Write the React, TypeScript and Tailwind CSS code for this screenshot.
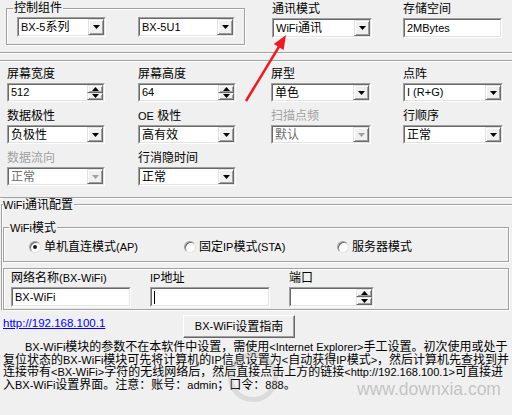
import React from 'react'

// Latin runs render a bit smaller than the CJK ones, like Tahoma 8pt next to SimSun 9pt
function T({ s }: { s: string }) {
  const parts = s.split(/([\x21-\x7E](?:[\x20-\x7E]*[\x21-\x7E])?)/)
  return (
    <>
      {parts.map((p, i) =>
        i % 2 === 1 ? (
          <span key={i} className="text-[11px]">
            {p}
          </span>
        ) : (
          <React.Fragment key={i}>{p}</React.Fragment>
        ),
      )}
    </>
  )
}

function DownTri({ gray }: { gray?: boolean }) {
  return (
    <svg width="7" height="4" viewBox="0 0 7 4">
      <path d="M0 0h7L3.5 4z" fill={gray ? '#a0a0a0' : '#000'} />
    </svg>
  )
}

function UpTri() {
  return (
    <svg width="7" height="4" viewBox="0 0 7 4">
      <path d="M0 4h7L3.5 0z" fill="#000" />
    </svg>
  )
}

function Sunken({ w, h = 'h-[19px]', children }: { w: string; h?: string; children: React.ReactNode }) {
  return (
    <div className={`${w} ${h} border border-t-[#a0a0a0] border-l-[#a0a0a0] border-r-white border-b-white`}>
      <div className="flex h-full border border-t-[#696969] border-l-[#696969] border-r-[#e3e3e3] border-b-[#e3e3e3] bg-white">
        {children}
      </div>
    </div>
  )
}

const raised =
  'border border-t-[#e3e3e3] border-l-[#e3e3e3] border-r-[#696969] border-b-[#696969] bg-[#f0f0f0] shadow-[inset_1px_1px_0_white,inset_-1px_-1px_0_#a0a0a0]'

function Combo({ value, w, h, disabled }: { value: string; w: string; h?: string; disabled?: boolean }) {
  return (
    <Sunken w={w} h={h}>
      <span className={`flex-1 pl-[2px] flex items-center whitespace-nowrap ${disabled ? 'text-[#6d6d6d]' : ''}`}>
        <T s={value} />
      </span>
      <div className={`w-[16px] h-full flex items-center justify-center ${raised}`}>
        <DownTri gray={disabled} />
      </div>
    </Sunken>
  )
}

function Spin({ value, w, h }: { value: string; w: string; h?: string }) {
  return (
    <Sunken w={w} h={h}>
      <span className="flex-1 pl-[2px] flex items-center">
        <T s={value} />
      </span>
      <div className="w-[16px] h-full flex flex-col">
        <div className={`flex-1 flex items-center justify-center ${raised}`}>
          <UpTri />
        </div>
        <div className={`flex-1 flex items-center justify-center ${raised}`}>
          <DownTri />
        </div>
      </div>
    </Sunken>
  )
}

function TextBox({ value, w, h, caret }: { value: string; w: string; h?: string; caret?: boolean }) {
  return (
    <Sunken w={w} h={h}>
      <span className="flex-1 pl-[2px] flex items-center">
        {caret && <span className="w-px h-[13px] bg-black" />}
        <T s={value} />
      </span>
    </Sunken>
  )
}

function Etched() {
  return <div className="h-[2px] border-t border-t-[#a0a0a0] border-b border-b-white" />
}

function Field({ label, disabled, children }: { label: string; disabled?: boolean; children: React.ReactNode }) {
  return (
    <div className="flex flex-col">
      <div className={`leading-[14px] h-[14px] whitespace-nowrap ${disabled ? 'text-[#a0a0a0]' : ''}`}>
        <T s={label} />
      </div>
      <div className="mt-[2px]">{children}</div>
    </div>
  )
}

function Radio({ label, checked, w }: { label: string; checked?: boolean; w: string }) {
  return (
    <div className={`flex items-center gap-[3px] ${w}`}>
      <div className="w-[12px] h-[12px] rounded-full border border-t-[#a0a0a0] border-l-[#a0a0a0] border-r-[#e3e3e3] border-b-[#e3e3e3] bg-white flex items-center justify-center shadow-[inset_1px_1px_0_#696969]">
        {checked && <div className="w-[4px] h-[4px] rounded-full bg-[#1a1a1a]" />}
      </div>
      <span className="whitespace-nowrap leading-[14px]">
        <T s={label} />
      </span>
    </div>
  )
}

const groupLine = 'border border-[#a0a0a0] shadow-[1px_1px_0_white,inset_1px_1px_0_white]'

export default function App() {
  return (
    <div className="relative w-[512px] h-[415px] overflow-hidden bg-[#f0f0f0] text-[12px] text-black font-['Liberation_Sans','Noto_Sans_CJK_SC',sans-serif]">
      {/* top: control group, comm mode, storage */}
      <div className="flex items-start h-[52px]">
        <div className={`relative ml-[6px] mt-[8px] w-[239px] h-[37px] ${groupLine}`}>
          <span className="absolute left-[6px] -top-[8px] px-px bg-[#f0f0f0] leading-[14px]">控制组件</span>
          <div className="flex items-start pt-[8px] pl-[10px] gap-[32px]">
            <Combo value="BX-5系列" w="w-[89px]" h="h-[20px]" />
            <Combo value="BX-5U1" w="w-[97px]" h="h-[20px]" />
          </div>
        </div>
        <div className="ml-[27px] pt-[2px]">
          <Field label="通讯模式">
            <Combo value="WiFi通讯" w="w-[100px]" h="h-[20px]" />
          </Field>
        </div>
        <div className="ml-[31px] pt-[2px]">
          <Field label="存储空间">
            <TextBox value="2MBytes" w="w-[99px]" h="h-[20px]" />
          </Field>
        </div>
      </div>
      <Etched />
      <div className="h-[6px]" />
      <Etched />

      {/* screen parameters */}
      <div className="grid grid-cols-[131px_133px_132px_100px] gap-y-[7px] pl-[7px] pt-[5px]">
        <Field label="屏幕宽度">
          <Spin value="512" w="w-[98px]" />
        </Field>
        <Field label="屏幕高度">
          <Spin value="64" w="w-[98px]" />
        </Field>
        <Field label="屏型">
          <Combo value="单色" w="w-[100px]" />
        </Field>
        <Field label="点阵">
          <Combo value="I  (R+G)" w="w-[100px]" />
        </Field>

        <Field label="数据极性">
          <Combo value="负极性" w="w-[98px]" />
        </Field>
        <Field label="OE 极性">
          <Combo value="高有效" w="w-[98px]" />
        </Field>
        <Field label="扫描点频" disabled>
          <Combo value="默认" w="w-[100px]" disabled />
        </Field>
        <Field label="行顺序">
          <Combo value="正常" w="w-[100px]" />
        </Field>

        <Field label="数据流向" disabled>
          <Combo value="正常" w="w-[98px]" disabled />
        </Field>
        <Field label="行消隐时间">
          <Combo value="正常" w="w-[98px]" />
        </Field>
      </div>

      <div className="h-[11px]" />
      <Etched />

      {/* WiFi config */}
      <div className="relative mt-[5px] ml-[1px] border-t border-l border-[#a0a0a0] shadow-[inset_1px_1px_0_white]">
        <span className="absolute left-[1px] -top-[7px] pr-px bg-[#f0f0f0] leading-[14px]">
          <T s="WiFi通讯配置" />
        </span>
        <div className={`relative mt-[22px] ml-[1px] w-[506px] h-[35px] ${groupLine}`}>
          <span className="absolute left-[5px] -top-[7px] px-px bg-[#f0f0f0] leading-[14px]">
            <T s="WiFi模式" />
          </span>
          <div className="flex items-center h-full pt-[5px] pl-[25px]">
            <Radio label="单机直连模式(AP)" checked w="w-[155px]" />
            <Radio label="固定IP模式(STA)" w="w-[153px]" />
            <Radio label="服务器模式" w="w-[100px]" />
          </div>
        </div>

        <div className={`mt-[6px] ml-[1px] w-[506px] h-[42px] ${groupLine}`}>
          <div className="grid grid-cols-[139px_139px_85px] pl-[7px] pt-[2px]">
            <Field label="网络名称(BX-WiFi)">
              <TextBox value="BX-WiFi" w="w-[120px]" h="h-[20px]" />
            </Field>
            <Field label="IP地址">
              <TextBox value="" w="w-[120px]" h="h-[20px]" caret />
            </Field>
            <Field label="端口">
              <Spin value="" w="w-[85px]" h="h-[20px]" />
            </Field>
          </div>
        </div>
      </div>

      {/* link + guide button */}
      <div className="flex items-start h-[25px] mt-[4px] pl-[3px]">
        <div className="w-[180px]">
          <a className="leading-[14px] text-[11.5px] text-[#0000ff] underline">http://192.168.100.1</a>
        </div>
        <div className="mt-[1px] w-[112px] h-[23px] border border-t-white border-l-white border-r-[#696969] border-b-[#696969] shadow-[inset_-1px_-1px_0_#a0a0a0] flex items-center justify-center whitespace-nowrap">
          <T s="BX-WiFi设置指南" />
        </div>
      </div>

      {/* help text */}
      <div className="pl-[3px] mt-[2px] leading-[12.5px]">
        <div className="pl-[22px] whitespace-nowrap">
          <T s="BX-WiFi模块的参数不在本软件中设置，需使用<Internet Explorer>手工设置。初次使用或处于" />
        </div>
        <div className="whitespace-nowrap">
          <T s="复位状态的BX-WiFi模块可先将计算机的IP信息设置为<自动获得IP模式>，然后计算机先查找到并" />
        </div>
        <div className="whitespace-nowrap">
          <T s="连接带有<BX-WiFi>字符的无线网络后，然后直接点击上方的链接<http://192.168.100.1>可直接进" />
        </div>
        <div className="whitespace-nowrap">
          <T s="入BX-WiFi设置界面。注意：账号：admin；口令：888。" />
        </div>
      </div>

      {/* watermark */}
      <div className="absolute left-[228px] top-[352px] w-[50px] h-[50px] rounded-full border-[5px] border-[#9a9a9a]/25" />
      <span className="absolute left-[357px] top-[380px] text-[17.5px] leading-[18px] text-[#8a8a8a]/45 font-['Liberation_Sans',sans-serif]">
        www.downxia.com
      </span>

      {/* red annotation arrow */}
      <svg className="absolute inset-0 pointer-events-none" width="512" height="415" viewBox="0 0 512 415">
        <line x1="246" y1="101" x2="280" y2="45" stroke="#ec1c24" strokeWidth="2.5" />
        <polygon points="286,35 283.6,50 273.8,44" fill="#ec1c24" />
      </svg>
    </div>
  )
}
